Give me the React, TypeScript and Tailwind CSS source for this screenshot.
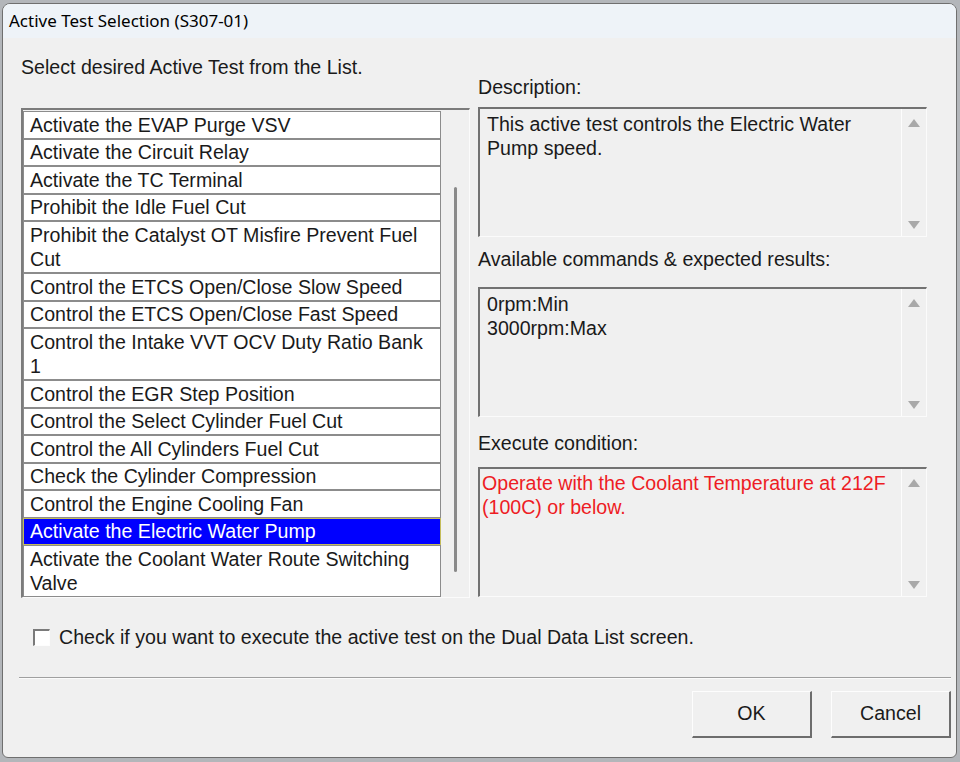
const tests = [
  "Activate the EVAP Purge VSV",
  "Activate the Circuit Relay",
  "Activate the TC Terminal",
  "Prohibit the Idle Fuel Cut",
  "Prohibit the Catalyst OT Misfire Prevent Fuel\nCut",
  "Control the ETCS Open/Close Slow Speed",
  "Control the ETCS Open/Close Fast Speed",
  "Control the Intake VVT OCV Duty Ratio Bank\n1",
  "Control the EGR Step Position",
  "Control the Select Cylinder Fuel Cut",
  "Control the All Cylinders Fuel Cut",
  "Check the Cylinder Compression",
  "Control the Engine Cooling Fan",
  "Activate the Electric Water Pump",
  "Activate the Coolant Water Route Switching\nValve",
];

const SELECTED = 13;

function Arrow({ down = false }: { down?: boolean }) {
  return (
    <svg width="12" height="8" viewBox="0 0 12 8" className="block">
      {down ? (
        <path d="M0 0 L12 0 L6 8 Z" fill="#a9a9a9" />
      ) : (
        <path d="M6 0 L12 8 L0 8 Z" fill="#a9a9a9" />
      )}
    </svg>
  );
}

function TextBox({ text, red = false }: { text: string; red?: boolean }) {
  return (
    <div className="flex h-[130px] border-t-2 border-l-2 border-r border-b border-t-[#727272] border-l-[#727272] border-r-[#fbfbfb] border-b-[#fbfbfb] bg-[#f0f0f0]">
      <div
        className={
          red
            ? "flex-1 whitespace-pre-line pl-[2px] pt-[2px] leading-[24px] text-[#ee1c24]"
            : "flex-1 whitespace-pre-line pl-[7px] pt-[3px] leading-[24px] text-[#1a1a1a]"
        }
      >
        {text}
      </div>
      <div className="flex w-[25px] flex-col items-center justify-between border-l border-[#fdfdfd] pt-[10px] pb-[7px]">
        <Arrow />
        <Arrow down />
      </div>
    </div>
  );
}

export default function App() {
  return (
    <div className="h-[762px] w-[960px] bg-[#b3b6ba] pt-[3px] pl-[2px] pr-[3px] pb-[4px] font-['Liberation_Sans',Arial,sans-serif] text-[19.6px] text-[#1a1a1a]">
      <div className="flex h-full flex-col overflow-hidden rounded-t-[8px] rounded-b-[6px] border border-[#6f6f6f] bg-[#f0f0f0]">
        <div className="flex h-[34px] shrink-0 items-center bg-[#eef3f8] pl-[6px] font-['Noto_Sans',sans-serif] text-[17px] text-black">
          Active Test Selection (S307-01)
        </div>

        <div className="ml-[18px] flex gap-[8px]">
          <div className="flex w-[449px] flex-col">
            <div className="mt-[17px] leading-[24px]">Select desired Active Test from the List.</div>
            <div className="mt-[29px] flex h-[490px] border-t-2 border-l-2 border-r border-b border-t-[#7c7c7c] border-l-[#7c7c7c] border-r-[#fbfbfb] border-b-[#fbfbfb]">
              <div className="flex w-[418px] flex-col pt-[1px]">
                {tests.map((t, i) => (
                  <div
                    key={t}
                    className={
                      i === SELECTED
                        ? "whitespace-pre-line border border-[#c4bc5a] bg-[#0000ff] py-[0.5px] pl-[6px] leading-[24.5px] text-white"
                        : "whitespace-pre-line border border-[#8c8c8c] bg-white py-[0.5px] pl-[6px] leading-[24.5px]"
                    }
                  >
                    {t}
                  </div>
                ))}
              </div>
              <div className="flex flex-1 justify-center pt-[77px]">
                <div className="h-[385px] w-[3px] rounded-full bg-[#8a8a8a]" />
              </div>
            </div>
          </div>

          <div className="flex w-[449px] flex-col">
            <div className="mt-[37px] leading-[24px]">Description:</div>
            <div className="mt-[8px]">
              <TextBox text={"This active test controls the Electric Water\nPump speed."} />
            </div>
            <div className="mt-[10px] leading-[24px]">Available commands &amp; expected results:</div>
            <div className="mt-[16px]">
              <TextBox text={"0rpm:Min\n3000rpm:Max"} />
            </div>
            <div className="mt-[14px] leading-[24px]">Execute condition:</div>
            <div className="mt-[12px]">
              <TextBox red text={"Operate with the Coolant Temperature at 212F\n(100C) or below."} />
            </div>
          </div>
        </div>

        <div className="ml-[30px] mt-[27px] flex items-center gap-[9px] leading-[24px]">
          <div className="h-[17px] w-[17px] border-t-2 border-l-2 border-r border-b border-t-[#7a7a7a] border-l-[#7a7a7a] border-r-[#fdfdfd] border-b-[#fdfdfd] bg-white" />
          <span>Check if you want to execute the active test on the Dual Data List screen.</span>
        </div>

        <div className="ml-[16px] mr-[5px] mt-[28px] h-[2px] border-t border-b border-t-[#a0a0a0] border-b-[#fbfbfb]" />

        <div className="mr-[5px] mt-[12px] flex justify-end gap-[19px]">
          <button className="flex h-[47px] w-[120px] items-center justify-center border-t border-l border-r-2 border-b-2 border-t-[#fdfdfd] border-l-[#fdfdfd] border-r-[#6d6d6d] border-b-[#6d6d6d] bg-[#f0f0f0] text-[19.6px] text-[#1a1a1a]">
            OK
          </button>
          <button className="flex h-[47px] w-[120px] items-center justify-center border-t border-l border-r-2 border-b-2 border-t-[#fdfdfd] border-l-[#fdfdfd] border-r-[#6d6d6d] border-b-[#6d6d6d] bg-[#f0f0f0] text-[19.6px] text-[#1a1a1a]">
            Cancel
          </button>
        </div>
      </div>
    </div>
  );
}
